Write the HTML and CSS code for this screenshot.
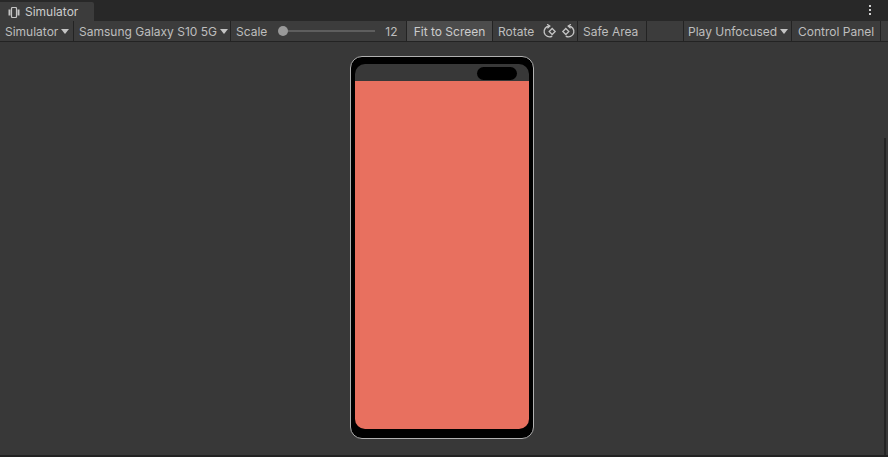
FILE: index.html
```html
<!DOCTYPE html>
<html>
<head>
<meta charset="utf-8">
<link rel="stylesheet" href="styles.css">
</head>
<body>
<div class="window">
  <div class="tabbar">
    <div class="tab">
      <svg class="tab-icon" width="12" height="11" viewBox="0 0 12 11">
        <rect x="0.5" y="2.5" width="2" height="6" fill="#c4c4c4"/>
        <rect x="9.5" y="2.5" width="2" height="6" fill="#c4c4c4"/>
        <rect x="3.5" y="0.5" width="5" height="10" rx="1" fill="none" stroke="#c4c4c4" stroke-width="1.2"/>
      </svg>
      <span>Simulator</span>
    </div>
    <div class="tab-fill"></div>
    <div class="menu-dots"><i></i><i></i><i></i></div>
  </div>
  <div class="toolbar">
    <div class="tb-item w-sim">Simulator<span class="caret"></span></div>
    <div class="tb-item w-dev">Samsung Galaxy S10 5G<span class="caret"></span></div>
    <div class="tb-item w-scale">
      <span>Scale</span>
      <div class="slider"><div class="knob"></div></div>
      <span class="val">12</span>
    </div>
    <div class="tb-item w-fit active">Fit to Screen</div>
    <div class="tb-item w-rot">Rotate
      <svg class="rot first" width="15" height="15" viewBox="0 0 14 14">
        <path d="M7 2 A5 5 0 1 0 9.5 11.3" fill="none" stroke="#c4c4c4" stroke-width="1.3"/>
        <path d="M4.8 0.3 L7.3 2 L5 4" fill="none" stroke="#c4c4c4" stroke-width="1.2"/>
        <path d="M9.5 4.2 L12.3 7 L9.5 9.8 L6.7 7 Z" fill="none" stroke="#c4c4c4" stroke-width="1.2"/>
      </svg>
      <svg class="rot" width="15" height="15" viewBox="0 0 14 14">
        <path d="M7 2 A5 5 0 1 1 4.5 11.3" fill="none" stroke="#c4c4c4" stroke-width="1.3"/>
        <path d="M9.2 0.3 L6.7 2 L9 4" fill="none" stroke="#c4c4c4" stroke-width="1.2"/>
        <path d="M4.5 4.2 L7.3 7 L4.5 9.8 L1.7 7 Z" fill="none" stroke="#c4c4c4" stroke-width="1.2"/>
      </svg>
    </div>
    <div class="tb-item w-safe">Safe Area</div>
    <div class="tb-item w-gap"></div>
    <div class="tb-item w-play">Play Unfocused<span class="caret"></span></div>
    <div class="tb-item w-cp">Control Panel</div>
    <div class="tb-rest"></div>
  </div>
  <div class="main">
    <div class="phone">
      <div class="screen">
        <div class="status"><div class="camera"></div></div>
        <div class="app"></div>
      </div>
    </div>
    <div class="right-edge"></div>
  </div>
  <div class="bottom"></div>
</div>
</body>
</html>
```
FILE: styles.css
```css
* { box-sizing: border-box; }
html, body { margin: 0; padding: 0; }
body {
  width: 888px;
  height: 457px;
  overflow: hidden;
  background: #383838;
  font-family: Inter, "Noto Sans", sans-serif;
  font-size: 12px;
  color: #bebebe;
}
.window { display: flex; flex-direction: column; height: 457px; }
.tabbar {
  height: 21px;
  background: #282828;
  display: flex;
  align-items: flex-end;
  position: relative;
}
.tab {
  width: 94px;
  height: 19px;
  background: #3c3c3c;
  border-top-right-radius: 2px;
  display: flex;
  align-items: center;
  padding-left: 8px;
  gap: 5px;
  color: #cccccc;
  font-size: 12px;
}
.tab-icon { margin-top: 1px; }
.tab-fill { flex: 1; }
.menu-dots {
  position: absolute;
  right: 17px;
  top: 5px;
  display: flex;
  flex-direction: column;
  gap: 2px;
}
.menu-dots i { display: block; width: 2px; height: 2px; background: #d0d0d0; }
.toolbar {
  height: 21px;
  background: #3c3c3c;
  display: flex;
  border-bottom: 1px solid #232323;
}
.tb-item {
  height: 20px;
  display: flex;
  align-items: center;
  padding-left: 5px;
  border-right: 1px solid #232323;
  white-space: nowrap;
  font-size: 12px;
}
.caret {
  display: inline-block;
  width: 0; height: 0;
  border-left: 4px solid transparent;
  border-right: 4px solid transparent;
  border-top: 5px solid #c4c4c4;
  margin-left: 3px;
  margin-top: 1px;
}
.w-sim { width: 74px; }
.w-dev { width: 157px; }
.w-scale { width: 176px; }
.slider {
  width: 92px;
  height: 2px;
  background: #5e5e5e;
  margin-left: 16px;
  position: relative;
}
.knob {
  position: absolute;
  left: -5px;
  top: -4px;
  width: 10px;
  height: 10px;
  border-radius: 50%;
  background: #999;
}
.val { margin-left: 10px; }
.w-fit { width: 86px; justify-content: center; padding-left: 0; }
.active { background: #4c4c4c; color: #cccccc; }
.w-rot { width: 85px; }
.rot { margin-left: 4px; }
.rot.first { margin-left: 8px; }
.w-safe { width: 69px; }
.w-gap { width: 37px; }
.w-play { width: 108px; padding-left: 4px; }
.w-cp { width: 89px; padding-left: 6px; }
.tb-rest { flex: 1; }
.main {
  flex: 1;
  position: relative;
  display: flex;
  justify-content: center;
  padding-top: 14px;
  padding-right: 4px;
}
.phone {
  width: 184px;
  height: 383px;
  border: 1px solid #b0b0b0;
  border-radius: 12px;
  background: #000;
  padding: 7px 4px 9px 4px;
}
.screen {
  height: 100%;
  border-radius: 10px;
  overflow: hidden;
  display: flex;
  flex-direction: column;
}
.status {
  height: 17px;
  background: #383838;
  display: flex;
  justify-content: flex-end;
  align-items: flex-start;
  padding: 3px 12px 0 0;
}
.camera {
  width: 40px;
  height: 13px;
  border-radius: 7px;
  background: #000;
}
.app { flex: 1; background: #e8705f; }
.right-edge {
  position: absolute;
  right: 2px;
  top: 96px;
  bottom: 0;
  width: 2px;
  background: #242424;
}
.bottom { height: 2px; background: #222; }
```
